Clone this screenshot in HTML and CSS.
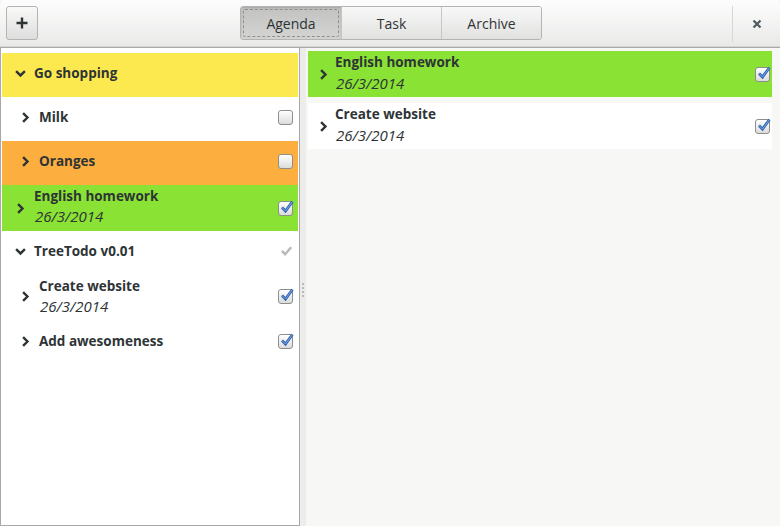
FILE: index.html
```html
<!DOCTYPE html>
<html>
<head>
<meta charset="utf-8">
<link rel="stylesheet" href="styles.css">
</head>
<body>
<div class="window">
  <header class="header">
    <button class="btn plus"><svg width="12" height="12" viewBox="0 0 12 12"><path d="M6 0.5 V11.5 M0.5 6 H11.5" stroke="#2e3436" stroke-width="2.4"/></svg></button>
    <div class="tabs">
      <div class="tab active"><span class="focus">Agenda</span></div>
      <div class="tab">Task</div>
      <div class="tab">Archive</div>
    </div>
    <div class="close-area">
      <span class="sep"></span>
      <svg class="close" width="10" height="10" viewBox="0 0 10 10"><path d="M1.5 1.5 L8.5 8.5 M8.5 1.5 L1.5 8.5" stroke="#4f5a5e" stroke-width="2.2" stroke-linecap="butt"/></svg>
    </div>
  </header>
  <div class="main">
    <div class="left">
      <div class="row yellow lvl0 h44">
        <svg class="chev" viewBox="0 0 10 10"><path d="M1 2.8 L5 6.8 L9 2.8" fill="none" stroke="#2e3436" stroke-width="2.2"/></svg>
        <div class="txt"><div class="title">Go shopping</div></div>
      </div>
      <div class="row lvl1 h44">
        <svg class="chev" viewBox="0 0 10 10"><path d="M2.8 1 L6.8 5 L2.8 9" fill="none" stroke="#2e3436" stroke-width="2.2"/></svg>
        <div class="txt"><div class="title">Milk</div></div>
        <span class="cb"></span>
      </div>
      <div class="row orange lvl1 h44">
        <svg class="chev" viewBox="0 0 10 10"><path d="M2.8 1 L6.8 5 L2.8 9" fill="none" stroke="#2e3436" stroke-width="2.2"/></svg>
        <div class="txt"><div class="title">Oranges</div></div>
        <span class="cb"></span>
      </div>
      <div class="row green lvl0 h46">
        <svg class="chev" viewBox="0 0 10 10"><path d="M2.8 1 L6.8 5 L2.8 9" fill="none" stroke="#2e3436" stroke-width="2.2"/></svg>
        <div class="txt"><div class="title">English homework</div><div class="date">26/3/2014</div></div>
        <span class="cb checked"><svg viewBox="0 0 16 16"><path d="M3 8.5 L6.5 12 L13.5 2.5" fill="none" stroke="#2f64b4" stroke-width="2.8"/><path d="M3 8.5 L6.5 12 L13.5 2.5" fill="none" stroke="#7fa8e4" stroke-width="1"/></svg></span>
      </div>
      <div class="row lvl0 h40">
        <svg class="chev" viewBox="0 0 10 10"><path d="M1 2.8 L5 6.8 L9 2.8" fill="none" stroke="#2e3436" stroke-width="2.2"/></svg>
        <div class="txt"><div class="title">TreeTodo v0.01</div></div>
        <span class="tick"><svg viewBox="0 0 14 14"><path d="M2 7.5 L5.5 11 L12 3.5" fill="none" stroke="#b8b8b8" stroke-width="2.6"/></svg></span>
      </div>
      <div class="row lvl1 h50">
        <svg class="chev" viewBox="0 0 10 10"><path d="M2.8 1 L6.8 5 L2.8 9" fill="none" stroke="#2e3436" stroke-width="2.2"/></svg>
        <div class="txt"><div class="title">Create website</div><div class="date">26/3/2014</div></div>
        <span class="cb checked"><svg viewBox="0 0 16 16"><path d="M3 8.5 L6.5 12 L13.5 2.5" fill="none" stroke="#2f64b4" stroke-width="2.8"/><path d="M3 8.5 L6.5 12 L13.5 2.5" fill="none" stroke="#7fa8e4" stroke-width="1"/></svg></span>
      </div>
      <div class="row lvl1 h40">
        <svg class="chev" viewBox="0 0 10 10"><path d="M2.8 1 L6.8 5 L2.8 9" fill="none" stroke="#2e3436" stroke-width="2.2"/></svg>
        <div class="txt"><div class="title">Add awesomeness</div></div>
        <span class="cb checked"><svg viewBox="0 0 16 16"><path d="M3 8.5 L6.5 12 L13.5 2.5" fill="none" stroke="#2f64b4" stroke-width="2.8"/><path d="M3 8.5 L6.5 12 L13.5 2.5" fill="none" stroke="#7fa8e4" stroke-width="1"/></svg></span>
      </div>
    </div>
    <div class="handle"><span class="dots"></span></div>
    <div class="right">
      <div class="item green">
        <svg class="chev" viewBox="0 0 10 10"><path d="M2.8 1 L6.8 5 L2.8 9" fill="none" stroke="#2e3436" stroke-width="2.2"/></svg>
        <div class="txt"><div class="title">English homework</div><div class="date">26/3/2014</div></div>
        <span class="cb checked"><svg viewBox="0 0 16 16"><path d="M3 8.5 L6.5 12 L13.5 2.5" fill="none" stroke="#2f64b4" stroke-width="2.8"/><path d="M3 8.5 L6.5 12 L13.5 2.5" fill="none" stroke="#7fa8e4" stroke-width="1"/></svg></span>
      </div>
      <div class="item white">
        <svg class="chev" viewBox="0 0 10 10"><path d="M2.8 1 L6.8 5 L2.8 9" fill="none" stroke="#2e3436" stroke-width="2.2"/></svg>
        <div class="txt"><div class="title">Create website</div><div class="date">26/3/2014</div></div>
        <span class="cb checked"><svg viewBox="0 0 16 16"><path d="M3 8.5 L6.5 12 L13.5 2.5" fill="none" stroke="#2f64b4" stroke-width="2.8"/><path d="M3 8.5 L6.5 12 L13.5 2.5" fill="none" stroke="#7fa8e4" stroke-width="1"/></svg></span>
      </div>
    </div>
  </div>
</div>
</body>
</html>
```

FILE: styles.css
```css
* { box-sizing: border-box; }
html, body { margin: 0; padding: 0; }
body {
  font-family: "Open Sans", "Noto Sans", "DejaVu Sans", sans-serif;
  color: #2e3436;
  background: #f6f6f5;
}
.window {
  width: 780px;
  height: 526px;
  display: flex;
  flex-direction: column;
  overflow: hidden;
}
.header {
  height: 48px;
  flex: none;
  display: flex;
  align-items: center;
  padding: 0 6px;
  background: linear-gradient(#fdfdfd, #e9e9e8);
  border-bottom: 1px solid #a9aaa9;
  border-top-left-radius: 5px;
  border-top-right-radius: 5px;
  box-shadow: inset 0 -1px 0 #d4d4d4;
}
.btn.plus {
  width: 32px;
  height: 34px;
  margin-top: -1px;
  border: 1px solid #b4b5b3;
  border-radius: 3px;
  background: linear-gradient(#f9f9f8, #dedede);
  padding: 0;
  display: flex;
  align-items: center;
  justify-content: center;
}
.tabs {
  display: flex;
  margin-left: 202px;
  margin-top: -1px;
  border: 1px solid #b4b5b3;
  border-radius: 3px;
  overflow: hidden;
  height: 34px;
}
.tab {
  width: 100px;
  display: flex;
  align-items: center;
  justify-content: center;
  font-size: 14px;
  background: linear-gradient(#f8f8f8, #e1e1e0);
  border-left: 1px solid #c6c7c5;
}
.tab:first-child { border-left: none; }
.tab.active {
  background: linear-gradient(#c2c3c1, #d4d5d3);
  box-shadow: inset 0 1px 2px rgba(0,0,0,0.15);
  padding: 2px;
}
.tab .focus {
  flex: 1;
  align-self: stretch;
  display: flex;
  align-items: center;
  justify-content: center;
  border: 1px dashed #8e908d;
  border-radius: 2px;
}
.close-area {
  margin-left: auto;
  display: flex;
  align-items: center;
  height: 100%;
}
.sep {
  width: 1px;
  height: 36px;
  background: #d6d6d5;
  margin-right: 19px;
}
.close { width: 10px; height: 10px; margin-right: 12px; }

.main {
  flex: 1;
  display: flex;
  min-height: 0;
}
.left {
  width: 300px;
  flex: none;
  background: #ffffff;
  border: 1px solid #a8a8a8;
  border-top: none;
  padding: 5px 1px 0 1px;
}
.row {
  display: flex;
  align-items: center;
  padding-right: 5px;
}
.row.h44 { height: 44px; padding-bottom: 4px; }
.row.h46 { height: 46px; }
.row.h40 { height: 40px; }
.row.h50 { height: 50px; }
.yellow { background: #fce94f; }
.orange { background: #fcaf3e; }
.green { background: #8ae234; }
.white { background: #ffffff; }
.chev { width: 11px; height: 11px; flex: none; }
.lvl0 { padding-left: 13px; }
.lvl1 { padding-left: 18px; }
.lvl0 .chev, .lvl1 .chev { margin-right: 8px; }
.txt { flex: 1; }
.title {
  font-size: 13.5px;
  font-weight: bold;
  line-height: 20px;
}
.date {
  font-size: 15px;
  font-style: italic;
  line-height: 21px;
  margin-left: 1px;
}
.cb {
  width: 15px;
  height: 15px;
  flex: none;
  border: 1px solid #8d8f8c;
  border-radius: 3px;
  background: linear-gradient(#ffffff, #dcdcdb);
  box-shadow: inset 0 1px 0 #fff;
  position: relative;
}
.cb svg {
  position: absolute;
  left: 0px;
  top: -3px;
  width: 16px;
  height: 16px;
}
.tick { width: 15px; height: 15px; flex: none; display: flex; justify-content: flex-end; }
.tick svg { width: 13px; height: 13px; margin-top: 0px; }

.handle {
  width: 6px;
  flex: none;
  background: #ececeb;
  display: flex;
  align-items: center;
  justify-content: center;
}
.dots {
  width: 2px;
  height: 16px;
  background: repeating-linear-gradient(#b9b9b9 0 2px, transparent 2px 4px);
  margin-top: 8px;
}
.right {
  flex: 1;
  padding: 3px 8px 0 2px;
  display: flex;
  flex-direction: column;
  gap: 6px;
  background: #f7f7f6;
}
.item {
  height: 46px;
  display: flex;
  align-items: center;
  padding: 0 2px 0 10px;
}
.item .chev { margin-right: 6px; }
.item .title { line-height: 20px; }
.item .date { line-height: 22px; }
.item .txt { margin-top: -3px; }
.row.h46 .txt { margin-top: -3px; }
.row.h50 .txt { margin-top: 1px; }
```
